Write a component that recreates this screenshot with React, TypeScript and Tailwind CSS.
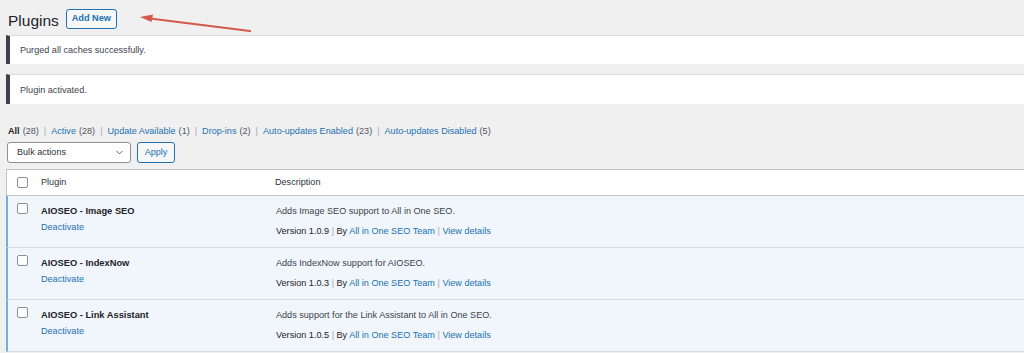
import { ChevronDown } from 'lucide-react'

const font = { fontFamily: "'Liberation Sans', Arial, sans-serif" }

const filters = [
  { label: 'All', count: 28, current: true },
  { label: 'Active', count: 28 },
  { label: 'Update Available', count: 1 },
  { label: 'Drop-ins', count: 2 },
  { label: 'Auto-updates Enabled', count: 23 },
  { label: 'Auto-updates Disabled', count: 5 }
]

const plugins = [
  { name: 'AIOSEO - Image SEO', desc: 'Adds Image SEO support to All in One SEO.', version: '1.0.9' },
  { name: 'AIOSEO - IndexNow', desc: 'Adds IndexNow support for AIOSEO.', version: '1.0.3' },
  { name: 'AIOSEO - Link Assistant', desc: 'Adds support for the Link Assistant to All in One SEO.', version: '1.0.5' }
]

function Checkbox() {
  return <div className="w-[11px] h-[11px] rounded-[2px] border border-[#8c8f94] bg-white" />
}

function Notice({ text, className = '' }: { text: string; className?: string }) {
  return (
    <div
      className={`h-[29px] flex items-center bg-white border-t border-[#dcdcde] border-l-[4px] border-l-[#3c434a] pl-[10px] pt-[2px] text-[9.1px] text-[#3c434a] ${className}`}
    >
      {text}
    </div>
  )
}

export default function App() {
  return (
    <div className="relative w-[1024px] h-[353px] overflow-hidden bg-[#f0f0f1] pl-[6px] text-[#1d2327]" style={font}>
      {/* page heading */}
      <div className="flex items-center h-[20px] mt-[9px] pl-[2px]">
        <h1 className="text-[15.5px] leading-[20px] pt-[3px] text-[#1d2327]">Plugins</h1>
        <button className="ml-[7px] h-[20px] w-[51px] rounded-[3px] border border-[#2271b1] bg-[#f6f7f7] text-[9.2px] font-bold text-[#2271b1]">
          Add New
        </button>
      </div>

      <Notice text="Purged all caches successfully." className="mt-[6px]" />
      <Notice text="Plugin activated." className="mt-[10px] h-[30px]" />

      {/* status filters */}
      <div className="flex items-center mt-[21px] pl-[2px] text-[9.1px] leading-[13px]">
        {filters.map((f, i) => (
          <span key={f.label} className="flex items-center">
            {i > 0 && <span className="mx-[5px] text-[#a7aaad]">|</span>}
            <span className={f.current ? 'font-bold text-[#1d2327]' : 'text-[#2271b1]'}>{f.label}</span>
            <span className="ml-[3px] text-[#50575e]">({f.count})</span>
          </span>
        ))}
      </div>

      {/* bulk actions */}
      <div className="flex items-center gap-[6px] mt-[4px] pl-[1px]">
        <div className="w-[124px] h-[21px] flex items-center justify-between rounded-[3px] border border-[#8c8f94] bg-white pl-[9px] pr-[5px] text-[9.1px] text-[#2c3338]">
          <span>Bulk actions</span>
          <ChevronDown size={11} strokeWidth={2} className="text-[#50575e]" />
        </div>
        <button className="w-[38px] h-[21px] rounded-[3px] border border-[#2271b1] bg-[#f6f7f7] text-[9.1px] text-[#2271b1]">
          Apply
        </button>
      </div>

      {/* plugin table */}
      <div className="mt-[6px] border-t border-l border-[#c3c4c7] bg-white">
        <div className="flex items-center h-[26px] border-b border-[#c3c4c7] text-[9.1px] text-[#2c3338]">
          <div className="w-[27px] flex justify-center pl-[3px]">
            <Checkbox />
          </div>
          <div className="w-[234px] pl-[7px]">Plugin</div>
          <div className="pl-[7px]">Description</div>
        </div>
        {plugins.map((p) => (
          <div key={p.name} className="flex h-[52px] bg-[#f0f6fc] border-b border-[#dcdcde] border-l-[2px] border-l-[#72aee6] -ml-px">
            <div className="w-[27px] flex justify-center pt-[7px] pl-[2px]">
              <Checkbox />
            </div>
            <div className="w-[234px] pl-[6px] pt-[9px] text-[9.1px] leading-[13px]">
              <div className="font-bold text-[9.3px] text-[#1d2327]">{p.name}</div>
              <div className="mt-[3px] text-[#2271b1]">Deactivate</div>
            </div>
            <div className="pl-[7px] pt-[9px] text-[9.1px] leading-[13px] text-[#3c434a]">
              <div>{p.desc}</div>
              <div className="mt-[7px] text-[#1d2327]">
                Version {p.version} <span className="text-[#a7aaad]">|</span> By{' '}
                <span className="text-[#2271b1]">All in One SEO Team</span>{' '}
                <span className="text-[#a7aaad]">|</span> <span className="text-[#2271b1]">View details</span>
              </div>
            </div>
          </div>
        ))}
      </div>

      {/* annotation arrow */}
      <svg className="absolute left-0 top-0 pointer-events-none" width="1024" height="60">
        <line x1="250" y1="31" x2="150" y2="18.5" stroke="#d35a4a" strokeWidth="2.2" strokeLinecap="round" />
        <polygon points="140,17 153,14.5 151.5,22" fill="#d35a4a" />
      </svg>
    </div>
  )
}
